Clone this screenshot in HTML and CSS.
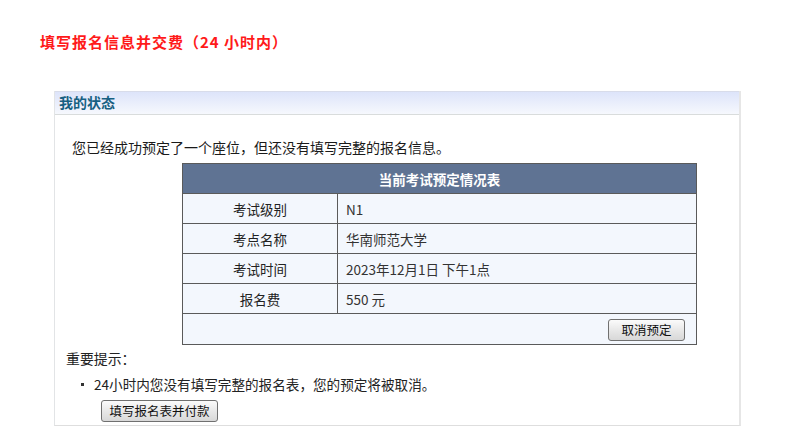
FILE: index.html
```html
<!DOCTYPE html>
<html lang="zh-CN">
<head>
<meta charset="utf-8">
<title>填写报名信息并交费</title>
<link rel="stylesheet" href="styles.css">
</head>
<body>
<h1 class="page-title">填写报名信息并交费（24 小时内）</h1>
<div class="panel">
  <div class="panel-head">我的状态</div>
  <div class="panel-body">
    <p class="intro">您已经成功预定了一个座位，但还没有填写完整的报名信息。</p>
    <table class="booking">
      <tr><th colspan="2">当前考试预定情况表</th></tr>
      <tr><td class="label">考试级别</td><td class="value">N1</td></tr>
      <tr><td class="label">考点名称</td><td class="value">华南师范大学</td></tr>
      <tr><td class="label">考试时间</td><td class="value">2023年12月1日 下午1点</td></tr>
      <tr><td class="label">报名费</td><td class="value">550 元</td></tr>
      <tr><td colspan="2" class="actions"><button class="btn btn-cancel">取消预定</button></td></tr>
    </table>
    <div class="notice-title">重要提示：</div>
    <ul class="notice-list">
      <li>24小时内您没有填写完整的报名表，您的预定将被取消。</li>
    </ul>
    <div class="pay-row"><button class="btn btn-pay">填写报名表并付款</button></div>
  </div>
</div>
</body>
</html>
```
FILE: styles.css
```css
html, body {
  margin: 0;
  padding: 0;
  background: #ffffff;
}
body {
  font-family: "Noto Sans CJK SC", "Liberation Sans", sans-serif;
  color: #222;
}
.page-title {
  margin: 0;
  padding: 32px 0 0 40px;
  height: 24px;
  font-size: 15px;
  line-height: 20px;
  font-weight: bold;
  letter-spacing: 1px;
  color: #ff1a1a;
  font-family: "Noto Sans CJK SC", sans-serif;
}
.panel {
  margin: 35px 0 0 54px;
  width: 684px;
  border-left: 1px solid #e2e4e6;
  border-right: 2px solid #e6e6e6;
  border-bottom: 1px solid #dedede;
  height: 334px;
}
.panel-head {
  height: 22px;
  line-height: 20px;
  padding-left: 4px;
  font-size: 14px;
  font-weight: bold;
  color: #176082;
  background: linear-gradient(#dde4fa, #f6f8fd);
  border-top: 1px solid #d8dcea;
  border-bottom: 1px solid #d9dcdc;
}
.intro {
  margin: 0;
  padding: 22px 0 0 17px;
  height: 26px;
  font-size: 14px;
  line-height: 20px;
  color: #1a1a1a;
}
.booking {
  margin-left: 127px;
  width: 515px;
  border-collapse: collapse;
  font-size: 13.5px;
}
.booking th, .booking td {
  border: 1px solid #5a5a5a;
  height: 29px;
  padding: 0;
}
.booking th {
  background: #5f7393;
  color: #ffffff;
  font-weight: bold;
  text-align: center;
  font-size: 13.5px;
}
.booking td {
  background: #f3f7fd;
}
.booking .label {
  width: 154px;
  text-align: center;
  color: #222;
}
.booking .value {
  padding-left: 8px;
  color: #333;
}
.booking .actions {
  text-align: right;
  padding-right: 11px;
  height: 30px;
}
.btn {
  font-family: "Noto Sans CJK SC", sans-serif;
  font-size: 12.5px;
  color: #111;
  height: 22px;
  padding: 0;
  line-height: 18px;
  border: 1px solid #707070;
  border-radius: 3px;
  background: linear-gradient(#fbfbfb, #e8e8e8 50%, #d8d8d8);
  vertical-align: middle;
}
.btn-cancel {
  width: 77px;
}
.notice-title {
  margin-top: 3px;
  padding-left: 11px;
  font-size: 13.9px;
  line-height: 20px;
  height: 20px;
}
.notice-list {
  margin: 6px 0 0 0;
  padding-left: 39px;
  font-size: 13.6px;
  line-height: 20px;
}
.notice-list li {
  list-style: none;
  position: relative;
}
.notice-list li::before {
  content: "";
  position: absolute;
  left: -13px;
  top: 9px;
  width: 3px;
  height: 3px;
  background: #333;
}
.pay-row {
  padding: 2px 0 0 46px;
}
.btn-pay {
  width: 117px;
}
```
